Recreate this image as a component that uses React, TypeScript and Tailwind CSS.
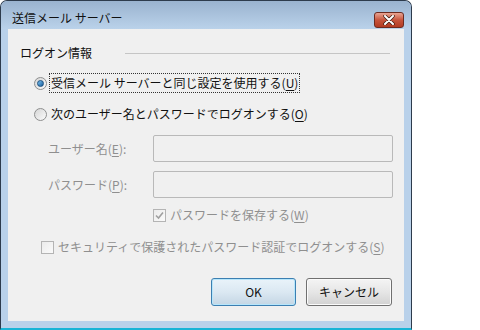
import React from "react";

const FONT = { fontFamily: '"Noto Sans CJK JP", "Noto Sans", sans-serif' };

const Key = ({ k }: { k: string }) => (
  <span>
    (<span className="underline underline-offset-2">{k}</span>)
  </span>
);

const Radio = ({ checked }: { checked?: boolean }) => (
  <span className="flex h-[13px] w-[13px] shrink-0 items-center justify-center rounded-full border border-[#8e8f8f] bg-gradient-to-br from-[#d6d6d6] to-[#fbfbfb]">
    {checked && (
      <span className="h-[7px] w-[7px] rounded-full border border-[#1a4f7e] bg-gradient-to-br from-[#7cc4f2] to-[#145c9a]" />
    )}
  </span>
);

const DisabledCheck = ({ checked }: { checked?: boolean }) => (
  <span className="flex h-[13px] w-[13px] shrink-0 items-center justify-center border border-[#b4b4b4] bg-gradient-to-br from-[#ebebeb] to-[#fafafa]">
    {checked && (
      <svg width="9" height="9" viewBox="0 0 9 9">
        <path d="M1 4.5 L3.5 7 L8 1.5" fill="none" stroke="#9f9f9f" strokeWidth="1.6" />
      </svg>
    )}
  </span>
);

export default function App() {
  return (
    <div className="h-[330px] w-[480px] bg-white" style={FONT}>
      <div className="flex h-[330px] w-[412px] flex-col rounded-t-[7px] border border-b-2 border-[#2d3b4c] border-b-[#19b4d6] bg-[#b9d1ea]">
        <div className="flex h-[28px] shrink-0 items-center justify-between rounded-t-[6px] bg-gradient-to-b from-[#9ab3cf] to-[#bad2ea] pl-[11px] pr-[7px]">
          <span className="pt-[6px] text-[12px] leading-none text-[#111]">送信メール サーバー</span>
          <button className="mt-[9px] flex h-[16px] w-[30px] items-center justify-center rounded-[3px] border border-[#6d2b20] bg-gradient-to-b from-[#e8a493] via-[#c7543c] to-[#b23b22]">
            <svg width="12" height="10" viewBox="0 0 12 10">
              <path d="M2 1 L10 9 M10 1 L2 9" stroke="#3b1a12" strokeWidth="3.4" strokeLinecap="round" />
              <path d="M2 1 L10 9 M10 1 L2 9" stroke="#ffffff" strokeWidth="2" strokeLinecap="round" />
            </svg>
          </button>
        </div>
        <div className="mx-[7px] mb-[7px] flex flex-1 flex-col bg-[#f0f0f0] text-[12px] text-[#111]">
          <div className="mt-[14px] flex h-[20px] items-center pl-[12px] pr-[14px]">
            <span>ログオン情報</span>
            <div className="ml-[33px] flex-1 border-t border-[#c5c5c5]" />
          </div>
          <div className="mt-[10px] flex h-[20px] items-center pl-[26px]">
            <Radio checked />
            <span className="ml-[2px] flex h-[20px] items-center border border-dotted border-[#333] px-[1px]">
              受信メール サーバーと同じ設定を使用する<Key k="U" />
            </span>
          </div>
          <div className="mt-[11px] flex h-[20px] items-center pl-[26px]">
            <Radio />
            <span className="ml-[4px]">
              次のユーザー名とパスワードでログオンする<Key k="O" />
            </span>
          </div>
          <div className="mt-[11px] flex h-[27px] items-center pl-[40px] text-[#8f8f8f]">
            <span className="w-[105px]">
              ユーザー名<Key k="E" />:
            </span>
            <div className="h-[27px] w-[240px] rounded-[2px] border border-[#b9b9b9] bg-[#f0f0f0]" />
          </div>
          <div className="mt-[9px] flex h-[27px] items-center pl-[40px] text-[#8f8f8f]">
            <span className="w-[105px]">
              パスワード<Key k="P" />:
            </span>
            <div className="h-[27px] w-[240px] rounded-[2px] border border-[#b9b9b9] bg-[#f0f0f0]" />
          </div>
          <div className="mt-[7px] flex h-[20px] items-center gap-[4px] pl-[145px] text-[#8f8f8f]">
            <DisabledCheck checked />
            <span>
              パスワードを保存する<Key k="W" />
            </span>
          </div>
          <div className="mt-[12px] flex h-[20px] items-center gap-[4px] pl-[33px] text-[#8f8f8f]">
            <DisabledCheck />
            <span>
              セキュリティで保護されたパスワード認証でログオンする<Key k="S" />
            </span>
          </div>
          <div className="mt-[21px] flex justify-end gap-[10px] pr-[12px]">
            <button className="h-[28px] w-[85px] rounded-[3px] border border-[#3c7fb1] bg-gradient-to-b from-[#e9f3fa] via-[#dbe8f2] to-[#c4d6e4] text-[12px] text-[#111] shadow-[inset_0_0_0_1px_#b7e6fb]">
              OK
            </button>
            <button className="h-[28px] w-[86px] rounded-[3px] border border-[#707070] bg-gradient-to-b from-[#f4f4f4] via-[#e6e6e6] to-[#d2d2d2] text-[12px] text-[#111] shadow-[inset_0_0_0_1px_#fbfbfb]">
              キャンセル
            </button>
          </div>
        </div>
      </div>
    </div>
  );
}
